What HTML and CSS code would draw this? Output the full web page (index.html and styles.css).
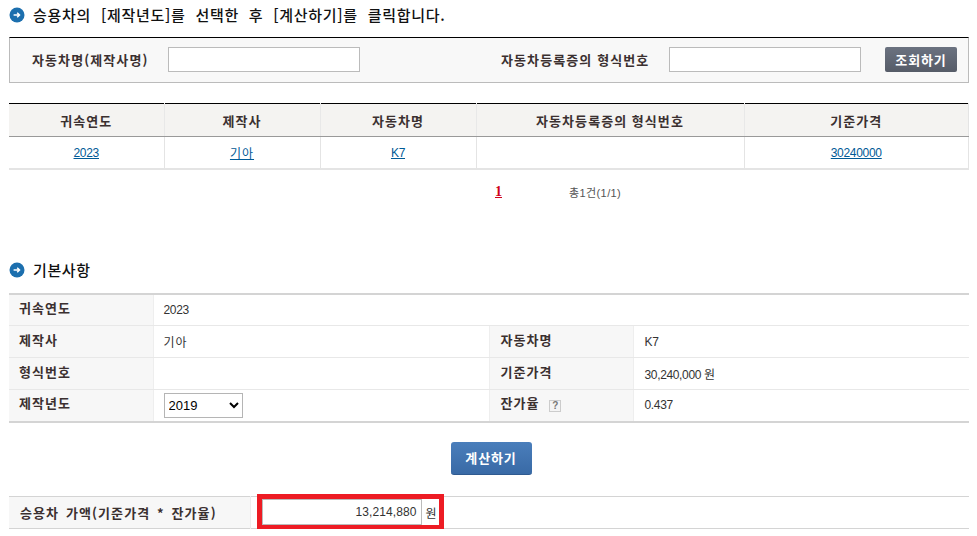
FILE: index.html
```html
<!DOCTYPE html>
<html lang="ko">
<head>
<meta charset="utf-8">
<title>승용차 가액</title>
<link rel="stylesheet" href="styles.css">
</head>
<body>
<main class="page">
  <h2 class="title title-first">
    <svg class="bullet" viewBox="0 0 16 16"><circle cx="8" cy="8" r="7.5" fill="#1c6fae"/><path d="M4.6 8h5.6M8.2 5.8 10.5 8 8.2 10.2" fill="none" stroke="#fff" stroke-width="1.5"/></svg>
    <span>승용차의 [제작년도]를 선택한 후 [계산하기]를 클릭합니다.</span>
  </h2>

  <form class="search">
    <label class="search-label label-a">자동차명(제작사명)</label>
    <input class="text-input" type="text">
    <label class="search-label label-b">자동차등록증의 형식번호</label>
    <input class="text-input" type="text">
    <button class="btn-search" type="button">조회하기</button>
  </form>

  <table class="list">
    <colgroup><col class="c1"><col class="c2"><col class="c3"><col class="c4"><col></colgroup>
    <thead>
      <tr><th>귀속연도</th><th>제작사</th><th>자동차명</th><th>자동차등록증의 형식번호</th><th>기준가격</th></tr>
    </thead>
    <tbody>
      <tr>
        <td><a href="#">2023</a></td>
        <td><a class="ko" href="#">기아</a></td>
        <td><a href="#">K7</a></td>
        <td></td>
        <td><a href="#">30240000</a></td>
      </tr>
    </tbody>
  </table>

  <div class="pager">
    <a class="pager-num" href="#">1</a>
    <span class="pager-total">총1건(1/1)</span>
  </div>

  <h2 class="title title-second">
    <svg class="bullet" viewBox="0 0 16 16"><circle cx="8" cy="8" r="7.5" fill="#1c6fae"/><path d="M4.6 8h5.6M8.2 5.8 10.5 8 8.2 10.2" fill="none" stroke="#fff" stroke-width="1.5"/></svg>
    <span>기본사항</span>
  </h2>

  <table class="info">
    <colgroup><col class="i1"><col class="i2"><col class="i3"><col></colgroup>
    <tbody>
      <tr><th>귀속연도</th><td colspan="3">2023</td></tr>
      <tr><th>제작사</th><td><span class="ko">기아</span></td><th>자동차명</th><td>K7</td></tr>
      <tr><th>형식번호</th><td></td><th>기준가격</th><td>30,240,000 원</td></tr>
      <tr>
        <th>제작년도</th>
        <td><select class="year"><option>2019</option></select></td>
        <th>잔가율 <span class="help">?</span></th>
        <td>0.437</td>
      </tr>
    </tbody>
  </table>

  <div class="actions"><button class="btn-calc" type="button">계산하기</button></div>

  <table class="result">
    <colgroup><col class="r1"><col></colgroup>
    <tbody>
      <tr>
        <th>승용차 가액(기준가격 * 잔가율)</th>
        <td>
          <div class="amount">
            <input class="amount-input" type="text" value="13,214,880" readonly>
            <span class="unit">원</span>
            <span class="highlight"></span>
          </div>
        </td>
      </tr>
    </tbody>
  </table>
</main>
</body>
</html>
```

FILE: styles.css
```css
* { box-sizing: border-box; }
html, body { margin: 0; padding: 0; background: #fff; }
body {
  font-family: "Liberation Sans", "Noto Sans CJK KR", sans-serif;
  font-size: 12px;
  color: #333;
  overflow: hidden;
}
.page { width: 960px; margin-left: 9px; }
.ko { letter-spacing: 1px; }

.title {
  display: flex;
  align-items: center;
  gap: 8px;
  margin: 0;
  font-family: "Noto Sans CJK KR", sans-serif;
  font-size: 15px;
  font-weight: 500;
  color: #111;
  letter-spacing: 0.6px;
  height: 20px;
  line-height: 20px;
}
.title-first { margin-top: 5px; margin-bottom: 12px; letter-spacing: 0.7px; word-spacing: 5px; }
.title-second { margin-top: 46px; margin-bottom: 13px; }
.bullet { width: 16px; height: 16px; flex: none; }

.search {
  display: flex;
  align-items: center;
  height: 46px;
  padding-bottom: 2px;
  border: 1px solid #bbb;
  border-top-color: #000;
  background: #f8f8f8;
}
.search-label {
  font-family: "Noto Sans CJK KR", sans-serif;
  font-size: 13px;
  font-weight: 700;
  color: #3b3030;
  letter-spacing: 1.1px;
  white-space: nowrap;
}
.label-a { margin-left: 22px; width: 136px; }
.label-b { margin-left: 141px; width: 168px; }
.text-input {
  width: 192px;
  height: 25px;
  border: 1px solid #bbb;
  background: #fff;
  padding: 0 4px;
}
.btn-search {
  width: 72px;
  height: 25px;
  margin-left: 24px;
  border: 0;
  border-radius: 2px;
  background: linear-gradient(#6b7280, #565c68);
  color: #fff;
  font: 700 13px "Noto Sans CJK KR", sans-serif;
  letter-spacing: 0.9px;
  padding: 0;
}

.list, .info, .result { width: 100%; border-collapse: collapse; table-layout: fixed; }

.list { margin-top: 20px; border-top: 1px solid #000; border-bottom: 2px solid #e4e4e4; }
.c1 { width: 155px; }
.c2 { width: 156px; }
.c3 { width: 156px; }
.c4 { width: 268px; }
.list th {
  height: 33px;
  background: #f4f3f1;
  border-bottom: 1px solid #999;
  border-left: 1px solid #e8e8e8;
  font-family: "Noto Sans CJK KR", sans-serif;
  font-size: 13px;
  font-weight: 700;
  color: #3b3030;
  letter-spacing: 1.05px;
  padding: 0;
}
.list td {
  height: 32px;
  text-align: center;
  border-left: 1px solid #e4e4e4;
  padding: 1px 0 0;
  letter-spacing: -0.3px;
}
.list td .ko { letter-spacing: 1px; }
.list th:first-child, .list td:first-child { border-left: 0; }
.list th:last-child, .list td:last-child { border-right: 1px solid #e4e4e4; }
.list a { color: #005a96; text-decoration: underline; }

.pager { display: flex; align-items: center; height: 44px; }
.pager-num {
  margin-left: 486px;
  font-family: "Liberation Serif", serif;
  font-size: 14px;
  font-weight: 700;
  color: #d0021b;
}
.pager-total { margin-left: 67px; font-size: 11px; color: #555; letter-spacing: 0.4px; }

.info { border-top: 2px solid #d4d4d4; border-bottom: 2px solid #d4d4d4; }
.i1 { width: 144px; }
.i2 { width: 336px; }
.i3 { width: 144px; }
.info th, .info td { height: 32px; border-bottom: 1px solid #e8e8e8; padding: 0; font-size: 12px; }
.info tr:last-child th, .info tr:last-child td { border-bottom: 0; }
.info th {
  background: #f7f7f7;
  border-left: 1px solid #eee;
  border-right: 1px solid #eee;
  text-align: left;
  padding: 0 0 5px 11px;
  font-family: "Noto Sans CJK KR", sans-serif;
  font-size: 13px;
  font-weight: 700;
  color: #3b3030;
  letter-spacing: 1.05px;
}
.info th:first-child { border-left: 0; padding-left: 10px; }
.info td { padding-left: 11px; color: #333; letter-spacing: -0.35px; }
.info td .ko { letter-spacing: 1px; }
.info th:first-child + td { padding-left: 10px; }
.year {
  display: block;
  width: 79px;
  height: 25px;
  border: 1px solid #b5b5b5;
  background: #fff;
  color: #000;
  font: 13px "Liberation Sans", sans-serif;
  padding-left: 0;
}
.help {
  display: inline-block;
  width: 12px;
  height: 12px;
  margin-left: 5px;
  border: 1px solid #ccc;
  background: #f4f4f4;
  color: #777;
  font: 700 10px/10px "Liberation Sans", sans-serif;
  text-align: center;
  vertical-align: -1px;
  letter-spacing: 0;
}

.actions { display: flex; justify-content: center; height: 33px; margin-top: 19px; padding-left: 4px; }
.btn-calc {
  width: 81px;
  height: 33px;
  border: 0;
  border-bottom: 1px solid #2f5a90;
  border-radius: 3px;
  background: linear-gradient(#4a7ebb, #396aa6);
  color: #fff;
  font: 700 13px "Noto Sans CJK KR", sans-serif;
  letter-spacing: 0.9px;
  padding: 0;
}

.result { margin-top: 21px; border-top: 1px solid #d4d4d4; border-bottom: 1px solid #d4d4d4; }
.r1 { width: 241px; }
.result th {
  height: 32px;
  background: #f7f7f7;
  border-right: 1px solid #eee;
  text-align: left;
  padding: 0 0 0 11px;
  font-family: "Noto Sans CJK KR", sans-serif;
  font-size: 13px;
  font-weight: 700;
  color: #3b3030;
  letter-spacing: 1.1px;
  word-spacing: 2px;
}
.result td { padding: 0 0 0 11px; }
.amount { position: relative; display: flex; align-items: center; gap: 4px; width: 180px; height: 26px; }
.amount-input {
  width: 160px;
  height: 26px;
  border: 1px solid #bbb;
  padding: 0 4px;
  text-align: right;
  font: 12px "Liberation Sans", sans-serif;
  color: #333;
  letter-spacing: 0.1px;
}
.unit { color: #333; }
.highlight {
  position: absolute;
  left: -5px;
  top: -5px;
  width: 187px;
  height: 36px;
  border: 5px solid #ed1c24;
  pointer-events: none;
}
```
